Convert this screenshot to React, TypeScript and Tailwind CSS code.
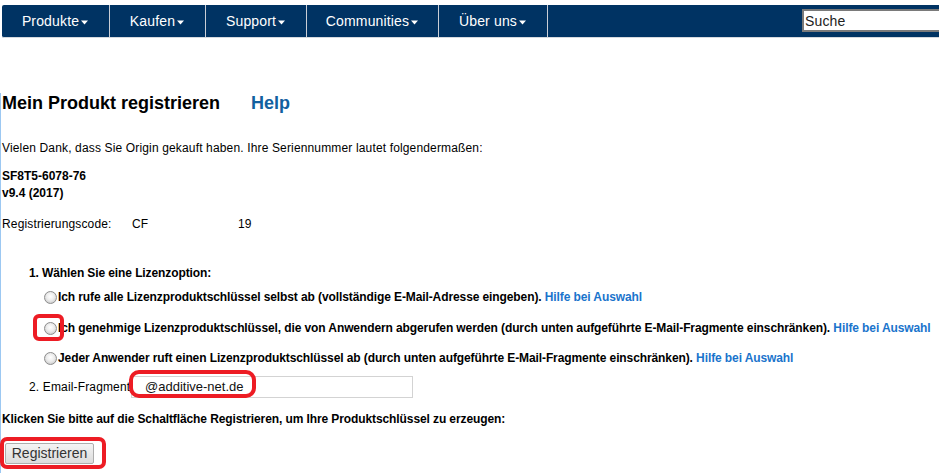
import { ReactNode } from 'react'

const NAV_ITEMS = [
  { label: 'Produkte', width: 'w-[108px]' },
  { label: 'Kaufen', width: 'w-[96px]' },
  { label: 'Support', width: 'w-[101px]' },
  { label: 'Communities', width: 'w-[132px]' },
  { label: 'Über uns', width: 'w-[109px]' },
]

const OPTIONS = [
  {
    text: 'Ich rufe alle Lizenzproduktschlüssel selbst ab (vollständige E-Mail-Adresse eingeben).',
    top: 'mt-[10px]',
    marked: false,
  },
  {
    text: 'Ich genehmige Lizenzproduktschlüssel, die von Anwendern abgerufen werden (durch unten aufgeführte E-Mail-Fragmente einschränken).',
    top: 'mt-[17px]',
    marked: true,
  },
  {
    text: 'Jeder Anwender ruft einen Lizenzproduktschlüssel ab (durch unten aufgeführte E-Mail-Fragmente einschränken).',
    top: 'mt-[16px]',
    marked: false,
  },
]

function Caret() {
  return (
    <svg width="9" height="5" viewBox="0 0 9 5" className="ml-[1px] mt-[2px]">
      <path d="M1 0.5h7L4.5 4.5z" fill="#ffffff" />
    </svg>
  )
}

function NavBar() {
  return (
    <div className="mt-[5px] ml-[2px] flex h-[33px] border-b border-[#d5d9de] bg-[#003363] rounded-l-[2px]">
      {NAV_ITEMS.map((item) => (
        <div
          key={item.label}
          className={`${item.width} flex shrink-0 items-center justify-center border-r border-[#c9ced6] text-[14px] text-white`}
        >
          {item.label}
          <Caret />
        </div>
      ))}
      <div className="ml-[254px] mt-[4px] flex h-[23px] w-[160px] shrink-0 items-center border-2 border-[#7a7a7a] border-r-0 bg-white pl-[1px] pt-[1px] text-[14px] text-[#222]">
        Suche
      </div>
    </div>
  )
}

function Radio({ children }: { children?: ReactNode }) {
  return (
    <span className="relative mr-[1px] inline-block h-[13px] w-[13px] shrink-0 rounded-full border border-[#8d8d8d] bg-[radial-gradient(circle_at_50%_40%,#ffffff_0%,#ececec_45%,#bcbcbc_100%)]">
      {children}
    </span>
  )
}

function RedMark({ className }: { className: string }) {
  return <span className={`pointer-events-none absolute border-[4px] border-[#ed1c24] ${className}`} />
}

export default function App() {
  return (
    <div className="h-[473px] w-[939px] overflow-hidden bg-white font-['Liberation_Sans',Arial,sans-serif] text-[12px] tracking-[0.15px] text-black">
      <NavBar />

      <div className="h-[435px] border-l border-[#9cc8f2] pl-[1px]">
        <div className="mt-[55px] flex h-[21px] items-center gap-[31px] text-[18px] font-bold leading-[21px] tracking-normal">
          <span>Mein Produkt registrieren</span>
          <span className="text-[#12609f]">Help</span>
        </div>

        <p className="mt-[27px] leading-[14px]">
          Vielen Dank, dass Sie Origin gekauft haben. Ihre Seriennummer lautet folgendermaßen:
        </p>

        <div className="mt-[13px] font-bold leading-[17px] tracking-normal">
          <div>SF8T5-6078-76</div>
          <div>v9.4 (2017)</div>
        </div>

        <div className="mt-[15px] flex leading-[14px]">
          <span className="w-[130px]">Registrierungscode:</span>
          <span className="w-[106px]">CF</span>
          <span>19</span>
        </div>

        <div className="mt-[35px] pl-[27px] font-bold leading-[14px] tracking-[-0.1px]">
          1. Wählen Sie eine Lizenzoption:
        </div>

        {OPTIONS.map((opt) => (
          <div
            key={opt.text}
            className={`${opt.top} flex h-[14px] items-center whitespace-nowrap pl-[42px] font-bold leading-[14px] tracking-[-0.1px]`}
          >
            <Radio>{opt.marked && <RedMark className="-left-[12px] -top-[9px] h-[27px] w-[31px] rounded-[6px]" />}</Radio>
            <span>
              {opt.text} <span className="text-[#1a74cc]">Hilfe bei Auswahl</span>
            </span>
          </div>
        ))}

        <div className="mt-[11px] flex h-[22px] items-center pl-[27px] leading-[14px]">
          <span className="w-[102px] whitespace-nowrap">2. Email-Fragment</span>
          <div className="relative">
            <div className="flex h-[22px] w-[282px] items-center border border-[#d3d3d3] pl-[13px] text-[13px] tracking-normal text-[#111]">
              @additive-net.de
            </div>
            <RedMark className="-left-[2px] -top-[6px] h-[28px] w-[127px] rounded-[10px]" />
          </div>
        </div>

        <p className="mt-[14px] whitespace-nowrap font-bold leading-[14px] tracking-[-0.1px]">
          Klicken Sie bitte auf die Schaltfläche Registrieren, um Ihre Produktschlüssel zu erzeugen:
        </p>

        <div className="relative mt-[17px] ml-[3px] w-fit">
          <button className="flex h-[21px] w-[89px] items-center justify-center rounded-[2px] border border-[#adadad] bg-gradient-to-b from-[#f4f4f4] to-[#dcdcdc] text-[14px] tracking-normal text-[#333]">
            Registrieren
          </button>
          <RedMark className="-left-[5px] -top-[6px] h-[32px] w-[106px] rounded-[7px]" />
        </div>
      </div>
    </div>
  )
}
